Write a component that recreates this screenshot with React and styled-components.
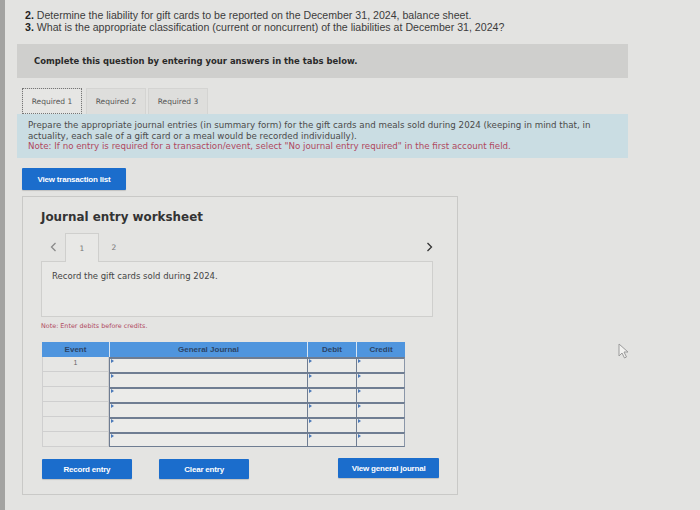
import React from 'react'
import styled, { createGlobalStyle } from 'styled-components'

const GlobalStyle = createGlobalStyle`
  html, body { margin: 0; padding: 0; background: #e2e2e0; }
  body { width: 700px; height: 510px; overflow: hidden; }
`

const Page = styled.div`
  position: relative;
  box-sizing: border-box;
  width: 700px;
  height: 510px;
  border-left: 5px solid #a3a3a1;
  padding: 9px 72px 0 12px;
  background: #e3e3e1;
  color: #333;
`

const Question = styled.div`
  padding-left: 8px;
  font-family: "Liberation Sans", Arial, sans-serif;
  font-size: 10.6px;
  line-height: 12px;
  color: #3c3c3c;
  b { font-weight: 700; color: #222; }
`

const Banner = styled.div`
  margin-top: 11px;
  height: 34px;
  display: flex;
  align-items: center;
  padding-left: 17px;
  background: #cfcfcd;
  font-family: "DejaVu Sans", Verdana, sans-serif;
  font-weight: 700;
  font-size: 8.45px;
  color: #2a2a2a;
`

const TabRow = styled.div`
  display: flex;
  margin-top: 10px;
  padding-left: 5px;
  height: 26px;
`

const Tab = styled.div`
  box-sizing: border-box;
  width: ${p => p.$w}px;
  margin-right: ${p => p.$gap}px;
  display: flex;
  align-items: center;
  justify-content: center;
  font-family: "DejaVu Sans", Verdana, sans-serif;
  font-size: 7.5px;
  color: #555;
  border: 1px solid #d4d4d2;
  border-bottom: none;
  background: ${p => (p.$active ? '#e6e6e4' : '#dededc')};
  outline: ${p => (p.$active ? '1px dotted #777' : 'none')};
  outline-offset: -1px;
`

const Info = styled.div`
  box-sizing: border-box;
  height: 44px;
  padding: 6px 11px;
  background: #cadde3;
  font-family: "DejaVu Sans", Verdana, sans-serif;
  font-size: 8.7px;
  line-height: 10.5px;
  color: #4a4a4a;
`

const NoteLine = styled.div`
  color: #b0485e;
`

const BlueButton = styled.div`
  box-sizing: border-box;
  width: ${p => p.$w}px;
  height: ${p => p.$h || 20}px;
  margin-top: ${p => p.$mt || 0}px;
  display: flex;
  align-items: center;
  justify-content: center;
  background: #1b6dcc;
  color: #fff;
  font-family: "Liberation Sans", Arial, sans-serif;
  font-weight: 700;
  font-size: 8px;
  letter-spacing: -0.2px;
  border-radius: 1px;
  box-shadow: 0 1px 1px rgba(0, 0, 0, 0.15);
`

const TopButtonWrap = styled.div`
  margin: 10px 0 0 5px;
`

const Panel = styled.div`
  box-sizing: border-box;
  width: 436px;
  height: 299px;
  margin: 6px 0 0 5px;
  padding: 12px 18px 0 18px;
  background: #e4e4e2;
  border: 1px solid #c9c9c7;
`

const Title = styled.div`
  font-family: "DejaVu Sans", Verdana, sans-serif;
  font-weight: 700;
  font-size: 11.9px;
  line-height: 16px;
  color: #333;
  height: 16px;
`

const NavRow = styled.div`
  display: flex;
  align-items: stretch;
  height: 28px;
  margin-top: 8px;
  font-family: "DejaVu Sans", Verdana, sans-serif;
`

const Arrow = styled.div`
  width: ${p => p.$w}px;
  display: flex;
  align-items: center;
  justify-content: center;
  color: ${p => p.$dark ? '#333' : '#8a8a8a'};
  margin-left: ${p => p.$auto ? 'auto' : '0'};
  svg { display: block; }
`

const StepTab = styled.div`
  box-sizing: border-box;
  width: ${p => p.$active ? 34 : 30}px;
  display: flex;
  align-items: center;
  justify-content: center;
  font-size: 7.5px;
  color: #777;
  background: ${p => p.$active ? '#e8e8e6' : 'transparent'};
  border: ${p => p.$active ? '1px solid #cfcfcd' : 'none'};
  border-bottom: none;
  margin-bottom: -1px;
  position: relative;
  z-index: 1;
`

const Prompt = styled.div`
  box-sizing: border-box;
  height: 56px;
  padding: 9px 10px;
  width: 392px;
  background: #e8e8e6;
  border: 1px solid #cfcfcd;
  font-family: "DejaVu Sans", Verdana, sans-serif;
  font-size: 8.5px;
  color: #444;
`

const SmallNote = styled.div`
  margin-top: 4px;
  height: 10px;
  line-height: 10px;
  font-family: "DejaVu Sans", Verdana, sans-serif;
  font-size: 6.4px;
  color: #b0485e;
`

const Table = styled.div`
  margin-top: 11px;
  margin-left: 1px;
  width: 363px;
  display: grid;
  grid-template-columns: 67px 198px 49px 49px;
`

const Head = styled.div`
  height: 15px;
  display: flex;
  align-items: center;
  justify-content: center;
  background: #4f95de;
  color: #2c4466;
  font-family: "Liberation Sans", Arial, sans-serif;
  font-weight: 700;
  font-size: 8px;
  border-left: ${p => p.$first ? 'none' : '1px solid #d7e6f5'};
`

const EventCell = styled.div`
  box-sizing: border-box;
  height: 15px;
  border: 1px solid #cfcfcf;
  border-top: none;
  background: #e6e6e4;
  font-family: "Liberation Sans", Arial, sans-serif;
  font-size: 7px;
  color: #666;
  text-align: center;
  line-height: 12px;
`

const InputCell = styled.div`
  position: relative;
  box-sizing: border-box;
  height: 15px;
  background: #ebebe9;
  border-top: 2px solid #6f7d92;
  border-left: 1px solid #6f7d92;
  border-right: ${p => p.$last ? '1px solid #8a96a8' : 'none'};
  border-bottom: ${p => p.$bottom ? '1px solid #6f7d92' : 'none'};
  &::before {
    content: '';
    position: absolute;
    left: 1px;
    top: 0;
    border-left: 3px solid #4a78b8;
    border-top: 2px solid transparent;
    border-bottom: 2px solid transparent;
  }
`

const ButtonRow = styled.div`
  display: flex;
  align-items: flex-start;
  margin-top: 12px;
  margin-left: 1px;
`

const Spacer = styled.div`
  width: ${p => p.$w}px;
`

const Cursor = styled.div`
  position: absolute;
  left: 613px;
  top: 343px;
`

const Chevron = ({ dir }) => (
  <svg width="7" height="10" viewBox="0 0 7 10">
    <path
      d={dir === 'left' ? 'M5.5 1 L1.5 5 L5.5 9' : 'M1.5 1 L5.5 5 L1.5 9'}
      fill="none"
      stroke="currentColor"
      strokeWidth="1.3"
    />
  </svg>
)

const rows = [0, 1, 2, 3, 4, 5]

export default function App() {
  return (
    <>
      <GlobalStyle />
      <Page>
        <Question>
          <div><b>2.</b> Determine the liability for gift cards to be reported on the December 31, 2024, balance sheet.</div>
          <div><b>3.</b> What is the appropriate classification (current or noncurrent) of the liabilities at December 31, 2024?</div>
        </Question>

        <Banner>Complete this question by entering your answers in the tabs below.</Banner>

        <TabRow>
          <Tab $w={60} $gap={4} $active>Required 1</Tab>
          <Tab $w={60} $gap={2}>Required 2</Tab>
          <Tab $w={60} $gap={0}>Required 3</Tab>
        </TabRow>

        <Info>
          <div>Prepare the appropriate journal entries (in summary form) for the gift cards and meals sold during 2024 (keeping in mind that, in actuality, each sale of a gift card or a meal would be recorded individually).</div>
          <NoteLine>Note: If no entry is required for a transaction/event, select "No journal entry required" in the first account field.</NoteLine>
        </Info>

        <TopButtonWrap>
          <BlueButton $w={104} $h={22}>View transaction list</BlueButton>
        </TopButtonWrap>

        <Panel>
          <Title>Journal entry worksheet</Title>
          <NavRow>
            <Arrow $w={24}><Chevron dir="left" /></Arrow>
            <StepTab $active>1</StepTab>
            <StepTab>2</StepTab>
            <Arrow $w={20} $auto $dark><Chevron dir="right" /></Arrow>
          </NavRow>
          <Prompt>Record the gift cards sold during 2024.</Prompt>
          <SmallNote>Note: Enter debits before credits.</SmallNote>

          <Table>
            <Head $first>Event</Head>
            <Head>General Journal</Head>
            <Head>Debit</Head>
            <Head>Credit</Head>
            {rows.map(i => (
              <React.Fragment key={i}>
                <EventCell>{i === 0 ? '1' : ''}</EventCell>
                <InputCell $bottom={i === 5} />
                <InputCell $bottom={i === 5} />
                <InputCell $bottom={i === 5} $last />
              </React.Fragment>
            ))}
          </Table>

          <ButtonRow>
            <BlueButton $w={90}>Record entry</BlueButton>
            <Spacer $w={27} />
            <BlueButton $w={91}>Clear entry</BlueButton>
            <Spacer $w={89} />
            <BlueButton $w={101} $mt={-1}>View general journal</BlueButton>
          </ButtonRow>
        </Panel>

        <Cursor>
          <svg width="12" height="16" viewBox="0 0 12 16">
            <path d="M1 1 L1 13 L4 10 L6.5 15 L8.5 14 L6 9 L10 9 Z" fill="#f2f2f0" stroke="#9a9a9a" strokeWidth="1" />
          </svg>
        </Cursor>
      </Page>
    </>
  )
}
